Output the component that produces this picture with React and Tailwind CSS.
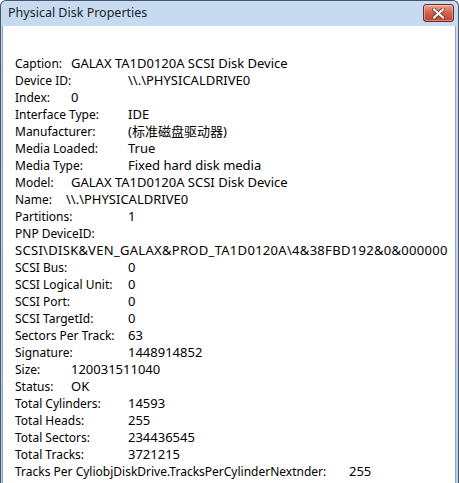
import React from 'react';

const rows = [
    ['Caption:', 56, 'GALAX TA1D0120A SCSI Disk Device'],
    ['Device ID:', 113, '\\\\.\\PHYSICALDRIVE0'],
    ['Index:', 56, '0'],
    ['Interface Type:', 113, 'IDE'],
    ['Manufacturer:', 113, '(标准磁盘驱动器)'],
    ['Media Loaded:', 113, 'True'],
    ['Media Type:', 113, 'Fixed hard disk media'],
    ['Model:', 56, 'GALAX TA1D0120A SCSI Disk Device'],
    ['Name:', 51, '\\\\.\\PHYSICALDRIVE0'],
    ['Partitions:', 113, '1'],
    ['PNP DeviceID:', 0, ''],
    ['', 0, 'SCSI\\DISK&VEN_GALAX&PROD_TA1D0120A\\4&38FBD192&0&000000'],
    ['SCSI Bus:', 113, '0'],
    ['SCSI Logical Unit:', 113, '0'],
    ['SCSI Port:', 113, '0'],
    ['SCSI TargetId:', 113, '0'],
    ['Sectors Per Track:', 113, '63'],
    ['Signature:', 113, '1448914852'],
    ['Size:', 56, '120031511040'],
    ['Status:', 56, 'OK'],
    ['Total Cylinders:', 113, '14593'],
    ['Total Heads:', 113, '255'],
    ['Total Sectors:', 113, '234436545'],
    ['Total Tracks:', 113, '3721215'],
    ['Tracks Per CyliobjDiskDrive.TracksPerCylinderNextnder:', 334, '255'],
];

const CloseButton = () => (
    <div className="w-[31px] h-[18px] rounded-[3px] border border-[#6b2a22] bg-gradient-to-b from-[#e8a593] via-[#d1614a] to-[#c0452f] flex items-center justify-center shadow-[inset_0_0_0_1px_rgba(255,255,255,0.35)]">
        <svg width="13" height="11" viewBox="0 0 13 11">
            <path d="M2 1.5 L11 9.5 M11 1.5 L2 9.5" stroke="#5a2a20" strokeWidth="3.6" strokeLinecap="square" />
            <path d="M2 1.5 L11 9.5 M11 1.5 L2 9.5" stroke="#ffffff" strokeWidth="2.2" strokeLinecap="square" />
        </svg>
    </div>
);

const App = () => {
    return (
        <div className="w-[459px] h-[483px] overflow-hidden bg-white">
            <div className="w-full h-full flex flex-col border border-[#4a5566] border-b-0 rounded-t-[6px] bg-gradient-to-b from-[#c6dbf1] to-[#b9d1ea] overflow-hidden">
                <div className="h-[25px] flex items-center justify-between pl-[7px] pr-[4px] shrink-0">
                    <span className="text-[12.5px] text-[#1e1e1e]" style={{ fontFamily: '"Segoe UI", "Noto Sans", sans-serif' }}>
                        Physical Disk Properties
                    </span>
                    <div className="-mt-[1px]"><CloseButton /></div>
                </div>
                <div className="flex-1 ml-[1px] mr-[2px] bg-white border-l border-r border-[#8ca3bd] pl-[12px] pt-[29px]"
                    style={{ fontFamily: '"Noto Sans", "Noto Sans CJK SC", sans-serif' }}>
                    {rows.map(([label, w, value], i) => (
                        <div key={i} className="flex h-[17px] items-center text-[12px] leading-[17px] text-black whitespace-nowrap">
                            {label && <span className="shrink-0" style={{ width: w ? w : 'auto' }}>{label}</span>}
                            {value && (
                                <span className={label ? 'text-[13px]' : 'text-[13px] tracking-[0.3px]'}>{value}</span>
                            )}
                        </div>
                    ))}
                </div>
            </div>
        </div>
    );
};

export default App;
